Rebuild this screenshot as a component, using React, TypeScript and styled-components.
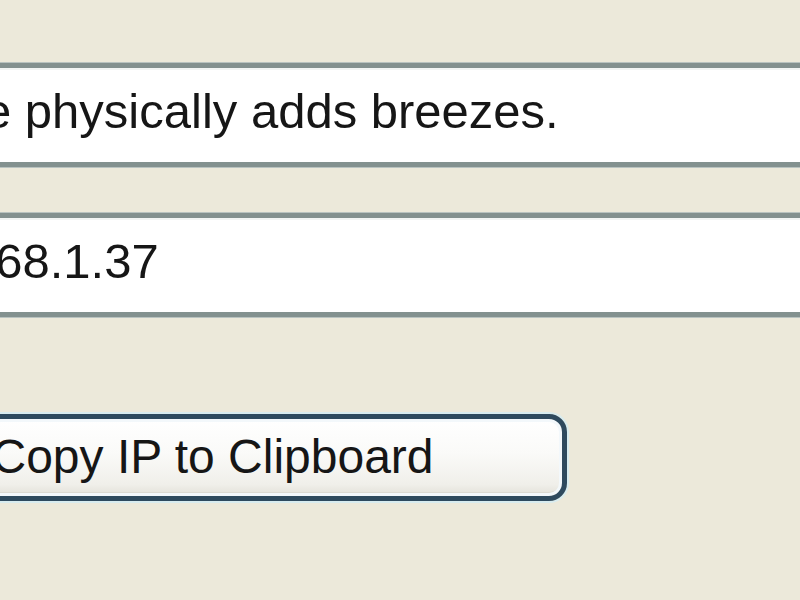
import React from "react"
import styled, { createGlobalStyle } from "styled-components"

const GlobalStyle = createGlobalStyle`
    html, body {
        margin: 0;
        padding: 0;
        background: #ECE9DA;
    }
    * {
        box-sizing: border-box;
    }
`

const Page = styled.main`
    width: 800px;
    height: 600px;
    overflow: hidden;
    background: #ECE9DA;
    display: flex;
    flex-direction: column;
    align-items: flex-start;
    padding-top: 63px;
    font-family: "Liberation Sans", Tahoma, Arial, sans-serif;
    color: #161616;
`

const FieldGroup = styled.div`
    display: flex;
    flex-direction: column;
    gap: 46px;
    width: 100%;
`

// the edit boxes run off both sides of the window
const Field = styled.div<{ $indent: number }>`
    margin-left: -60px;
    width: 940px;
    height: 104px;
    background: #FFFFFF;
    border-top: 5px solid #83918F;
    border-bottom: 5px solid #83918F;
    border-left: 5px solid #83918F;
    box-shadow: 0 -1px 0 #B9C3C0, 0 1px 0 #B9C3C0, inset 0 2px 0 #F2F5F4;
    display: flex;
    align-items: center;
    padding-bottom: 8px;
    font-size: 49px;
    line-height: 1;
    white-space: nowrap;
    text-indent: ${(p) => p.$indent}px;
`

const ButtonRow = styled.div`
    margin-top: 97px;
    display: flex;
`

const PushButton = styled.button`
    margin-left: -142px;
    width: 709px;
    height: 87px;
    border: 5px solid #2E4A5E;
    border-radius: 18px;
    background: linear-gradient(180deg, #FFFFFF 0%, #FAFAF8 45%, #F0EFEA 85%, #E2E0D8 100%);
    box-shadow: 0 0 0 2px #D8ECEF, inset 0 0 0 3px #F3F8FB, inset 0 -4px 0 #DCDAD2;
    font-family: "Liberation Sans", Tahoma, Arial, sans-serif;
    font-size: 48px;
    color: #161616;
    padding: 0 0 2px 0;
    white-space: nowrap;
`

export default function App() {
    return (
        <Page>
            <GlobalStyle />
            <FieldGroup>
                <Field $indent={39}>e physically adds breezes.</Field>
                <Field $indent={23}>168.1.37</Field>
            </FieldGroup>
            <ButtonRow>
                <PushButton>Copy IP to Clipboard</PushButton>
            </ButtonRow>
        </Page>
    )
}
